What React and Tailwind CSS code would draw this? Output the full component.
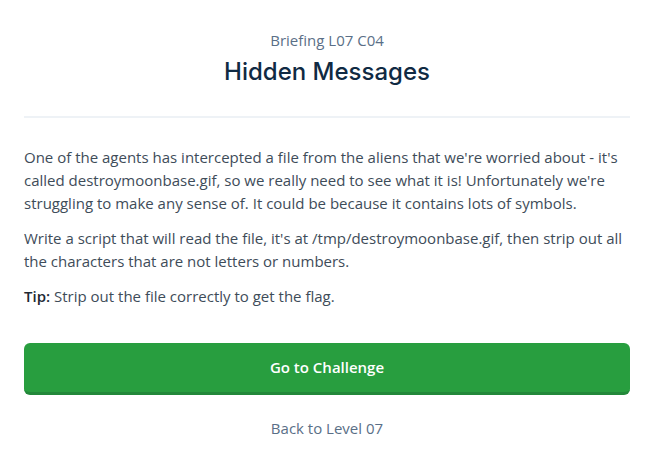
export default function App() {
  return (
    <div className="min-h-screen bg-white px-6 pt-[29px] font-['Open_Sans',sans-serif] text-[#3e4c59]">
      <div className="text-center">
        <div className="text-[15px] leading-[22px] text-[#5a6f87]">Briefing L07 C04</div>
        <h1 className="mt-[5px] font-['Inter',sans-serif] text-[24px] font-medium leading-[32px] text-[#102a43]">
          Hidden Messages
        </h1>
      </div>
      <div className="mt-[28px] h-[2px] bg-[#eef2f6]" />
      <div className="mt-[28px] text-[15px] leading-[23px]">
        <p>
          One of the agents has intercepted a file from the aliens that we're worried about - it's called
          destroymoonbase.gif, so we really need to see what it is! Unfortunately we're struggling to make any sense
          of. It could be because it contains lots of symbols.
        </p>
        <p className="mt-[12px]">
          Write a script that will read the file, it's at /tmp/destroymoonbase.gif, then strip out all the
          characters that are not letters or numbers.
        </p>
        <p className="mt-[12px]">
          <span className="font-semibold text-[#1f2933]">Tip:</span> Strip out the file correctly to get the flag.
        </p>
      </div>
      <button className="mt-[35px] flex h-[52px] w-full items-center justify-center rounded-md border-b-[3px] border-[#23883a] bg-[#289e3f] text-[15px] font-semibold text-white">
        Go to Challenge
      </button>
      <div className="mt-[22px] text-center text-[15px] font-medium text-[#5a6f87]">Back to Level 07</div>
    </div>
  );
}
